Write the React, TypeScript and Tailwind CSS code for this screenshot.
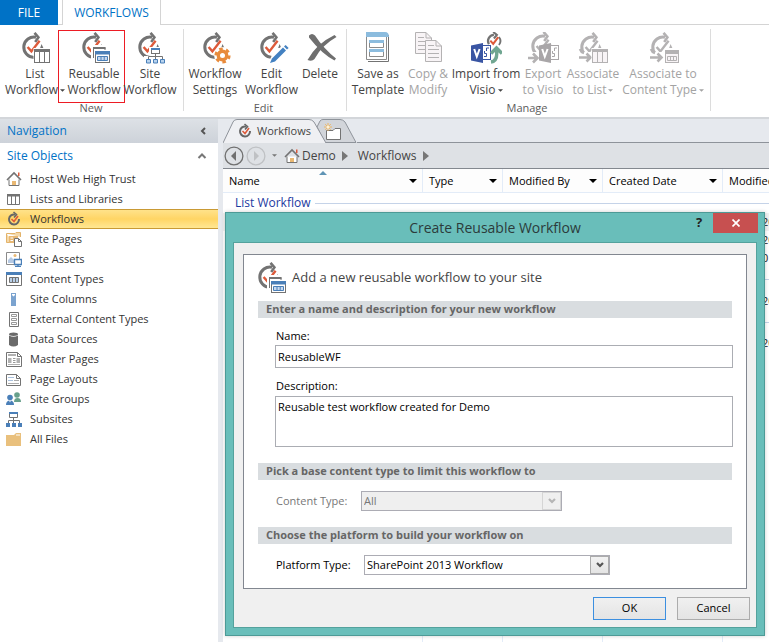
import type { ReactNode } from "react";

const GRAY = "#737373";
const RED = "#dd5a3a";
const BLUE = "#4a7fb8";
const FADED = "#b4b2b3";

type Tint = { off?: boolean };

function FlowMark({ off, check = true }: Tint & { check?: boolean }) {
  const c = off ? FADED : GRAY;
  return (
    <g fill="none">
      <path d="M16 5.2A10.2 10.2 0 1 0 14 25.4" stroke={c} strokeWidth="3" />
      <path d="M14.5 0.8L18.4 5.4L15.2 10" stroke={c} strokeWidth="2.6" />
      {check && <path d="M7.6 15L11.4 19.4L19.6 8.8" stroke={off ? FADED : RED} strokeWidth="2.4" />}
      <path d="M21.5 12L23.4 16H20.2Z" fill={c} />
    </g>
  );
}

function Icon({ children }: { children: ReactNode }) {
  return (
    <svg viewBox="0 0 32 32" className="h-8 w-8 shrink-0" aria-hidden="true">
      {children}
    </svg>
  );
}

function ListFlowIcon({ off }: Tint) {
  const c = off ? FADED : GRAY;
  return (
    <Icon>
      <FlowMark off={off} />
      {off && (
        <g>
          <rect x="0" y="20" width="15" height="11" fill="#fff" />
          <path d="M2 17Q3 20 6 21M1 25.5H11M8.5 21.5L12.5 25.5L8.5 29.5" fill="none" stroke={c} strokeWidth="2.6" />
        </g>
      )}
      <rect x="13.5" y="16" width="18" height="16" fill="#fff" />
      <rect x="14.5" y="17.5" width="15" height="13" fill={off ? "#f8f4f6" : "#fff"} stroke={c} />
      <path d="M14 17H30V20H14Z" fill={c} />
      <path d="M19.5 20V30.5M24.5 20V30.5" stroke={c} />
    </Icon>
  );
}

function ReusableIcon() {
  return (
    <Icon>
      <FlowMark />
      <path d="M11 13H26V17H31V32H13V28H11Z" fill="#fff" />
      <path d="M13.5 26V15.5H25V18" fill="none" stroke={GRAY} />
      <path d="M13 15H25.5V17H13Z" fill={GRAY} />
      <rect x="15.5" y="19.5" width="14" height="11" fill="#fff" stroke={GRAY} />
      <path d="M15 19H30V22.5H15Z" fill={BLUE} />
      <path d="M17.5 24.5H27.5V28.5H17.5ZM21 24.5V28.5M24.2 24.5V28.5" fill="#c7d9ef" stroke={BLUE} />
    </Icon>
  );
}

function SiteFlowIcon() {
  return (
    <Icon>
      <FlowMark />
      <rect x="13" y="15" width="12" height="8" fill="#fff" />
      <path d="M8 24H30V32H8Z" fill="#fff" />
      <rect x="15.5" y="16.5" width="8" height="5" fill="#fff" stroke={GRAY} />
      <path d="M15 16H24V18H15Z" fill={BLUE} />
      <path d="M19.5 22V27M12.5 27V24.5H26.5V27" fill="none" stroke={GRAY} />
      <path d="M10.5 27.5H14.5V31H10.5ZM17.5 27.5H21.5V31H17.5ZM24.5 27.5H28.5V31H24.5Z" fill="#b8d3ee" stroke={BLUE} />
    </Icon>
  );
}

function SettingsFlowIcon() {
  return (
    <Icon>
      <FlowMark />
      <circle cx="21.5" cy="23.5" r="8.4" fill="#fff" />
      <circle cx="21.5" cy="23.5" r="4.2" fill="none" stroke="#e88b3c" strokeWidth="3.4" />
      <circle cx="21.5" cy="23.5" r="6.6" fill="none" stroke="#e88b3c" strokeWidth="3" strokeDasharray="3.5 3.41" />
    </Icon>
  );
}

function EditFlowIcon() {
  return (
    <Icon>
      <FlowMark />
      <path d="M10 32L14 23L27 11L32 15L19 30Z" fill="#fff" />
      <path d="M12 31L14 26.5L25 15.5L28 18.5L17 29.5Z" fill="#4381c1" />
      <path d="M26 14.5L27.6 12.9L30.6 15.9L29 17.5Z" fill="#4381c1" />
    </Icon>
  );
}

function DeleteIcon() {
  return (
    <Icon>
      <path d="M3 3.5Q6 0.5 9 3.5Q18 17 30 26.5L28.5 28.5Q16 22 3 5.5Z" fill="#6f6f6f" />
      <path d="M28.5 3L30.5 5Q16 13 8.5 27Q6 30 1.5 28Q10 12 28.5 3Z" fill="#6f6f6f" />
    </Icon>
  );
}

function TemplateIcon() {
  return (
    <Icon>
      <path d="M6 29.5H26.5V3" fill="none" stroke={GRAY} />
      <path d="M4.5 1.5H24.5V27.5H4.5Z" fill="#fff" stroke="#8b8b8b" />
      <path d="M4 0H23Q27 0 27 5H4Z" fill="#8cbcde" />
      <path d="M7.5 8.5H21.5V15.5H7.5ZM7.5 17.5H21.5V24.5H7.5Z" fill="#fff" stroke="#8b8b8b" />
      <path d="M7 8H22V11H7ZM7 17H22V20H7Z" fill="#8cbcde" />
    </Icon>
  );
}

function CopyIcon() {
  return (
    <Icon>
      <g fill="#f8f4f6" stroke={FADED}>
        <path d="M3.5 0.5H14L19.5 6V21.5H3.5Z" />
        <path d="M14 0.5V6H19.5M6 5.5H12M6 9.5H17M6 13.5H14M6 17.5H14" fill="none" />
        <path d="M13.5 8.5H24L29.5 14V29.5H13.5Z" />
        <path d="M24 8.5V14H29.5M16 13.5H22M16 17.5H27M16 21.5H27M16 25.5H27" fill="none" />
      </g>
    </Icon>
  );
}

function VisioBadge({ off, x }: Tint & { x: number }) {
  const c = off ? "#a9a6a8" : "#3955a3";
  return (
    <g transform={`translate(${x} 11)`}>
      <rect x="10" y="2.5" width="9.5" height="14" fill="#fff" stroke={c} />
      <path d="M13 13.5H15.5V10.5H13.5V8M15.5 8V5H18" fill="none" stroke={c} />
      <path d="M0 2.5L12 0V20L0 17.5Z" fill={c} />
      <path d="M3.2 6L5.8 13.5L8.6 6" fill="none" stroke="#fff" strokeWidth="2" />
    </g>
  );
}

function ImportIcon() {
  return (
    <Icon>
      <g transform="translate(16 0) scale(.72)">
        <path d="M11 4A8.6 8.6 0 0 0 4 17" fill="none" stroke={GRAY} strokeWidth="3" />
        <path d="M10 0L15 4L11 9" fill="none" stroke={GRAY} strokeWidth="3" />
        <path d="M18 7A9 9 0 0 1 18 18" fill="none" stroke={GRAY} strokeWidth="2.6" />
        <path d="M6 12L10 16.5L17 7" fill="none" stroke={RED} strokeWidth="2.8" />
      </g>
      <VisioBadge x={1} />
      <path d="M21 21.5L26.5 16L32 21.5M26.5 18Q28 29 21 30" fill="none" stroke="#70a691" strokeWidth="3.4" />
    </Icon>
  );
}

function ExportIcon() {
  return (
    <Icon>
      <g transform="translate(2 -1)">
        <FlowMark off />
      </g>
      <rect x="0" y="20" width="14" height="12" fill="#fff" />
      <path d="M1 26H9M6 21.5L10.5 26L6 30.5" fill="none" stroke={FADED} strokeWidth="2.6" />
      <VisioBadge x={12} off />
    </Icon>
  );
}

function ContentFlowIcon() {
  return (
    <Icon>
      <FlowMark off />
      <rect x="0" y="20" width="15" height="11" fill="#fff" />
      <path d="M2 17Q3 20 6 21M1 25.5H11M8.5 21.5L12.5 25.5L8.5 29.5" fill="none" stroke={FADED} strokeWidth="2.6" />
      <rect x="15" y="17" width="17" height="15" fill="#fff" />
      <rect x="16.5" y="19.5" width="13" height="11" fill="#f8f4f6" stroke={FADED} />
      <path d="M16 18H30V22H16Z" fill={FADED} />
      <path d="M18.5 24.5H27.5V28.5H18.5ZM21.5 24.5V28.5M24.5 24.5V28.5" fill="none" stroke={FADED} />
    </Icon>
  );
}

function Caret({ className }: { className: string }) {
  return (
    <svg viewBox="0 0 8 4" className={className} aria-hidden="true">
      <path d="M0 0H8L4 4Z" fill="currentColor" />
    </svg>
  );
}

type ActionProps = {
  icon: ReactNode;
  iconPad?: string;
  top: string;
  bottom?: string;
  width: string;
  menu?: boolean;
  off?: boolean;
  marked?: boolean;
};

function Action({ icon, iconPad = "pl-1", top, bottom, width, menu, off, marked }: ActionProps) {
  return (
    <button
      type="button"
      disabled={off}
      className={`relative flex flex-col items-center whitespace-nowrap text-xs leading-4 ${width} ${off ? "text-[#a3a3a3]" : "text-[#444]"}`}
    >
      <span className={`flex ${iconPad}`}>{icon}</span>
      <span className="mt-0.5">{top}</span>
      {bottom && (
        <span className="flex items-center gap-0.5">
          {bottom}
          {menu && <Caret className="h-[3px] w-[5px]" />}
        </span>
      )}
      {marked && <span className="absolute -top-0.5 -left-2 h-[73px] w-[67px] border border-[#ed1c24]" />}
    </button>
  );
}

function Group({ label, pad, children }: { label: string; pad: string; children: ReactNode }) {
  return (
    <section aria-label={label} className={`flex flex-col border-r border-[#dcdcdc] ${pad}`}>
      <div className="flex h-[73px] pt-[3px]">{children}</div>
      <div className="mt-1 text-center text-[11px] leading-3 text-[#5c5c5c]">{label}</div>
    </section>
  );
}

function Ribbon() {
  return (
    <header className="shrink-0 bg-white">
      <div className="flex h-[25px] text-xs">
        <button type="button" className="w-[58px] bg-[#0072c6] text-white">FILE</button>
        <div className="w-1 border-b border-[#d4d4d4]" />
        <button type="button" className="w-[99px] border-x border-[#d4d4d4] text-[#0072c6]">WORKFLOWS</button>
        <div className="flex-1 border-b border-[#d4d4d4]" />
      </div>
      <div className="flex h-[94px] overflow-hidden border-b-2 border-[#d3d6da] pt-1 pb-1.5">
        <Group label="New" pad="pl-1 pr-[5px]">
          <Action icon={<ListFlowIcon />} iconPad="pl-0.5" top="List" bottom="Workflow" width="w-[62px]" menu />
          <Action icon={<ReusableIcon />} top="Reusable" bottom="Workflow" width="w-[56px]" marked />
          <Action icon={<SiteFlowIcon />} top="Site" bottom="Workflow" width="w-[56px]" />
        </Group>
        <Group label="Edit" pad="pr-[3px]">
          <Action icon={<SettingsFlowIcon />} top="Workflow" bottom="Settings" width="w-[62px]" />
          <Action icon={<EditFlowIcon />} top="Edit" bottom="Workflow" width="w-[51px]" />
          <Action icon={<DeleteIcon />} top="Delete" width="w-[46px]" />
        </Group>
        <Group label="Manage" pad="pl-[3px] pr-[6px]">
          <Action icon={<TemplateIcon />} iconPad="pl-0" top="Save as" bottom="Template" width="w-[56px]" />
          <Action icon={<CopyIcon />} iconPad="pl-0" top="Copy &" bottom="Modify" width="w-[44px]" off />
          <Action icon={<ImportIcon />} iconPad="pl-0" top="Import from" bottom="Visio" width="w-[72px]" menu />
          <Action icon={<ExportIcon />} iconPad="pl-0" top="Export" bottom="to Visio" width="w-[42px]" off />
          <Action icon={<ListFlowIcon off />} iconPad="pl-0.5" top="Associate" bottom="to List" width="w-[58px]" menu off />
          <Action icon={<ContentFlowIcon />} top="Associate to" bottom="Content Type" width="w-[82px]" menu off />
        </Group>
      </div>
    </header>
  );
}

const HOME = (
  <g>
    <path d="M3 8.5V14.5H13V8.5" fill="#fff" stroke={GRAY} />
    <path d="M1 9L8 2L15 9" fill="none" stroke={GRAY} strokeWidth="1.6" />
    <path d="M12 1.5H13.5V5H12Z" fill={RED} />
    <path d="M6 10H10V14H6Z" fill="#e9b872" />
  </g>
);

const FLOW = (
  <g fill="none">
    <path d="M9 3.5A5 5 0 1 0 13 8" stroke="#666" strokeWidth="2" />
    <path d="M7.5 1L10.5 3.5L8 6.5" stroke="#666" strokeWidth="1.6" />
    <path d="M5.5 8L8 10.5L12 5" stroke={RED} strokeWidth="1.6" />
  </g>
);

function Small({ children }: { children: ReactNode }) {
  return (
    <svg viewBox="0 0 16 16" className="h-4 w-4 shrink-0" aria-hidden="true">
      {children}
    </svg>
  );
}

const NAV: { label: string; icon: ReactNode; current?: boolean }[] = [
  { label: "Host Web High Trust", icon: HOME },
  {
    label: "Lists and Libraries",
    icon: (
      <g>
        <path d="M1.5 3.5H13.5V13.5H1.5ZM5.5 5V13.5M9.5 5V13.5" fill="#fff" stroke={GRAY} />
        <path d="M1 3H14V5.5H1Z" fill={GRAY} />
      </g>
    ),
  },
  { label: "Workflows", icon: FLOW, current: true },
  {
    label: "Site Pages",
    icon: (
      <g>
        <path d="M0.5 2.5H9L10 1.5H14.5V6M0.5 2.5V11.5H7" fill="#f4d8a8" stroke="#e3b36a" />
        <path d="M3 5H12V12H3Z" fill="#e8b873" />
        <path d="M4.5 7H7M4.5 9.5H7" stroke="#fff" />
        <path d="M8.5 7.5H12.5L15.5 10.5V15.5H8.5Z" fill="#fff" stroke={GRAY} />
        <path d="M12.5 7.5V10.5H15.5" fill="none" stroke={GRAY} />
      </g>
    ),
  },
  {
    label: "Site Assets",
    icon: (
      <g>
        <path d="M0.5 1.5H13.5V13.5H0.5Z" fill="#fff" stroke="#8a8a8a" />
        <circle cx="9" cy="4.5" r="1.5" fill="#e9b872" />
        <path d="M2 12V9L5 6L8 9V12Z" fill="#b6c9e2" />
        <path d="M8.5 8.5H15.5V13.5H8.5Z" fill="#fff" stroke={BLUE} strokeWidth="1.4" />
        <path d="M9 15.5H15M12 13.5V15.5" stroke={BLUE} strokeWidth="1.4" />
      </g>
    ),
  },
  {
    label: "Content Types",
    icon: (
      <g>
        <path d="M0.5 1.5H15.5V14.5H0.5Z" fill="#fff" stroke={GRAY} />
        <path d="M0 1H16V4H0Z" fill={BLUE} />
        <path d="M3.5 6.5H12.5V11.5H3.5ZM6.5 6.5V11.5M9.5 6.5V11.5" fill="#b8cfe8" stroke={GRAY} />
      </g>
    ),
  },
  {
    label: "Site Columns",
    icon: (
      <g>
        <path d="M5 2H10V15H5Z" fill="#7ba3cf" />
        <path d="M6 3H9V4L7.5 5.5L6 4Z" fill="#fff" />
      </g>
    ),
  },
  {
    label: "External Content Types",
    icon: (
      <g fill="#fff" stroke={GRAY}>
        <path d="M3.5 1.5H12.5V15.5H3.5Z" />
        <path d="M5.5 3.5H10.5V5.5H5.5ZM5.5 7.5H10.5V9.5H5.5ZM5.5 11.5H10.5V13.5H5.5Z" stroke="#999" />
      </g>
    ),
  },
  {
    label: "Data Sources",
    icon: (
      <g fill="#6a6a6a">
        <path d="M3 4.5Q7.5 7 12 4.5V14Q7.5 17 3 14Z" />
        <ellipse cx="7.5" cy="3.2" rx="4.5" ry="1.7" />
      </g>
    ),
  },
  {
    label: "Master Pages",
    icon: (
      <g>
        <path d="M0.5 1.5H11.5L15.5 5.5V15.5H0.5Z" fill="#fff" stroke={GRAY} />
        <path d="M11.5 1.5V5.5H15.5" fill="none" stroke={GRAY} />
        <path d="M2 3H10V5H2ZM2 7H5.5V12H2ZM10.5 7H14V12H10.5ZM2 13H14V14H2Z" fill="#b0b0b0" />
        <path d="M7 7.5H9.5M7 9.5H9.5M7 11.5H9.5" stroke="#999" />
      </g>
    ),
  },
  {
    label: "Page Layouts",
    icon: (
      <g fill="none" stroke={GRAY}>
        <path d="M0.5 3.5H10.5L14.5 7.5V14.5H0.5Z" fill="#fff" />
        <path d="M10.5 3.5V7.5H14.5" />
        <path d="M2 6.5H8M2 9.5H7" stroke="#a9c1de" />
        <path d="M8 9.5H13M2 12.5H13" stroke="#aaa" />
      </g>
    ),
  },
  {
    label: "Site Groups",
    icon: (
      <g>
        <circle cx="11" cy="4" r="2.8" fill="#68a08c" />
        <path d="M8 11Q8 7 11.5 7Q15 7 15 11Z" fill="#68a08c" />
        <circle cx="4" cy="6.5" r="2.8" fill={BLUE} />
        <path d="M0 14Q0 9.5 4 9.5Q8 9.5 8 14Z" fill={BLUE} />
        <path d="M3 9.5H5L4 11.5Z" fill="#fff" />
      </g>
    ),
  },
  {
    label: "Subsites",
    icon: (
      <g>
        <path d="M3.5 1.5H11.5V6.5H3.5ZM7.5 6.5V12M2.5 12V9.5H13.5V12" fill="none" stroke={GRAY} />
        <path d="M3 1H12V3H3ZM0 12H4V16H0ZM6 12H10V16H6ZM12 12H16V16H12Z" fill={BLUE} />
      </g>
    ),
  },
  {
    label: "All Files",
    icon: (
      <g>
        <path d="M0 4H8L10 2H15V15H0Z" fill="#e9c07d" />
        <path d="M10 4H14" stroke="#fff" />
      </g>
    ),
  },
];

function Navigation() {
  return (
    <nav className="flex w-[218px] shrink-0 flex-col bg-white text-[11px]">
      <div className="flex h-6 items-center justify-between bg-gradient-to-b from-[#dde1e6] to-[#cdd2d9] pr-[11px] pl-[7px] text-xs text-[#0072c6]">
        Navigation
        <svg viewBox="0 0 8 8" className="h-2 w-2" aria-hidden="true">
          <path d="M6 1L3 4L6 7" fill="none" stroke="#555" strokeWidth="2" />
        </svg>
      </div>
      <div className="flex h-[25px] items-center justify-between pr-[11px] pl-[7px] text-xs text-[#0072c6]">
        Site Objects
        <svg viewBox="0 0 10 8" className="h-2 w-2.5" aria-hidden="true">
          <path d="M1.5 6L5 2.5L8.5 6" fill="none" stroke="#777" strokeWidth="2" />
        </svg>
      </div>
      <ul className="pt-px">
        {NAV.map((item) => (
          <li key={item.label}>
            <a
              href="#"
              aria-current={item.current ? "page" : undefined}
              className={`flex h-5 items-center gap-2 border-y pl-1.5 text-[#333] ${
                item.current ? "border-[#c99a35] bg-gradient-to-b from-[#ffe28a] via-[#ffd564] to-[#ffe793]" : "border-transparent"
              }`}
            >
              <Small>{item.icon}</Small>
              {item.label}
            </a>
          </li>
        ))}
      </ul>
    </nav>
  );
}

function TabStrip() {
  return (
    <div className="flex h-6 items-end">
      <button type="button" className="relative z-10 flex h-6 w-[104px] shrink-0 items-center gap-1 pl-3.5 text-[11px] text-[#444]">
        <svg viewBox="0 0 104 24" className="absolute inset-0 -z-10 h-6 w-[104px]" aria-hidden="true">
          <path d="M0 24L10 3Q11 .5 14 .5H86Q89 .5 91 3L103 24" fill="#eff0f3" stroke="#8e939a" />
        </svg>
        <Small>{FLOW}</Small>
        Workflows
      </button>
      <button type="button" aria-label="New tab" className="relative -ml-2.5 h-6 w-10 shrink-0">
        <svg viewBox="0 0 40 24" className="h-6 w-10" aria-hidden="true">
          <path d="M0 8L3 2Q4 .5 6 .5H23Q26 .5 28 3L39 23.5H8Z" fill="#d2d5da" stroke="#8e939a" />
          <path d="M9.5 11.5H16L18 9.5H23.5V20.5H9.5Z" fill="#fff" stroke={GRAY} />
          <path d="M11 4V12M7 8H15M8.2 5.2L13.8 10.8M13.8 5.2L8.2 10.8" stroke="#eeb765" />
          <circle cx="11" cy="8" r="1.5" fill="#fff3d8" />
        </svg>
      </button>
      <div className="h-px flex-1 bg-[#8e939a]" />
    </div>
  );
}

function RoundArrow({ off }: Tint) {
  const c = off ? "#bfc1c4" : "#707070";
  return (
    <button type="button" aria-label={off ? "Forward" : "Back"} disabled={off}>
      <svg viewBox="0 0 20 20" className="h-5 w-5" aria-hidden="true">
        <circle cx="10" cy="10" r="8.9" fill="none" stroke={c} strokeWidth="1.3" />
        <path d={off ? "M8 5V15L13 10Z" : "M12 5V15L7 10Z"} fill={c} />
      </svg>
    </button>
  );
}

function Chevron() {
  return (
    <svg viewBox="0 0 6 10" className="h-2.5 w-1.5 shrink-0" aria-hidden="true">
      <path d="M0 0V10L6 5Z" fill="#777" />
    </svg>
  );
}

function Breadcrumb() {
  return (
    <div className="flex h-[26px] items-center border-b border-[#83888f] bg-[#dee1e5] pl-px text-xs text-[#444]">
      <RoundArrow />
      <span className="w-0.5" />
      <RoundArrow off />
      <Caret className="ml-1.5 h-[3px] w-[5px] text-[#777]" />
      <nav aria-label="Path" className="ml-[7px] flex items-center gap-1.5">
        <a href="#" className="flex items-center gap-0.5">
          <Small>{HOME}</Small>
          Demo
        </a>
        <Chevron />
        <a href="#" className="pl-1">Workflows</a>
        <Chevron />
      </nav>
    </div>
  );
}

const LINE = "border-r border-[#e3ecf8]";

function GroupRow({ title, height }: { title?: string; height: string }) {
  return (
    <tr className={height}>
      <td colSpan={5} className="p-0">
        <div className="flex items-center gap-1 pl-3">
          <span className="text-[#1c3aa0]">{title}</span>
          <span className="h-px flex-1 bg-[#c5d3e8]" />
        </div>
      </td>
    </tr>
  );
}

function DataRow({ value, picked }: { value: string; picked?: boolean }) {
  return (
    <tr className={`h-[18px] ${picked ? "bg-[#f2f2f2]" : ""}`}>
      <td className={LINE} />
      <td className={LINE} />
      <td className={LINE} />
      <td className={LINE} />
      <td className="overflow-hidden p-0 pl-[39px] text-[#222]">{value}</td>
    </tr>
  );
}

const COLUMNS = ["Name", "Type", "Modified By", "Created Date"];

function Listing() {
  return (
    <div className="flex-1 overflow-hidden bg-white">
      <table className="h-full w-full table-fixed border-separate border-spacing-0 text-[11px] leading-4 whitespace-nowrap">
        <colgroup>
          <col className="w-[200px]" />
          <col className="w-[80px]" />
          <col className="w-[100px]" />
          <col className="w-[120px]" />
          <col />
        </colgroup>
        <thead>
          <tr className="h-6 bg-[#fdfdfd]">
            {COLUMNS.map((name) => (
              <th key={name} scope="col" className={`relative border-b p-0 pr-[5px] pl-1.5 font-normal ${LINE}`}>
                <span className="flex items-center justify-between text-black">
                  {name}
                  <Caret className="h-1 w-2" />
                </span>
                {name === "Name" && (
                  <svg viewBox="0 0 8 4" className="absolute top-0.5 left-24 h-1 w-2" aria-hidden="true">
                    <path d="M0 4L4 0L8 4Z" fill="#5f94b5" />
                  </svg>
                )}
              </th>
            ))}
            <th scope="col" className="overflow-hidden border-b border-[#e3ecf8] p-0 pl-1.5 text-left font-normal">
              Modified
            </th>
          </tr>
        </thead>
        <tbody>
          <GroupRow title="List Workflow" height="h-5 text-xs" />
          <DataRow value="20" picked />
          <DataRow value="20" />
          <DataRow value="01" />
          <GroupRow height="h-[25px]" />
          <DataRow value="20" />
          <GroupRow height="h-6" />
          <DataRow value="20" />
          <tr>
            <td className={LINE} />
            <td className={LINE} />
            <td className={LINE} />
            <td className={LINE} />
            <td />
          </tr>
        </tbody>
      </table>
    </div>
  );
}

function Band({ children }: { children: ReactNode }) {
  return <h2 className="h-[17px] bg-[#d9dde0] pl-2 text-[11px] leading-4 font-bold text-[#666]">{children}</h2>;
}

function Drop({ id, value, width, off }: { id: string; value: string; width: string; off?: boolean }) {
  return (
    <div className={`relative ${width}`}>
      <select
        id={id}
        disabled={off}
        defaultValue={value}
        className={`block h-5 w-full appearance-none rounded-none border border-[#acacb4] pl-0.5 opacity-100 ${
          off ? "bg-[#efefef] text-[#777]" : "bg-white text-black"
        }`}
      >
        <option>{value}</option>
      </select>
      <span
        className={`pointer-events-none absolute inset-y-px right-px flex w-[19px] items-center justify-center border ${
          off ? "border-[#d5d5d5] bg-[#efefef] text-[#b5b5b5]" : "border-[#acacac] bg-gradient-to-b from-[#f2f2f2] to-[#e4e4e4] text-[#555]"
        }`}
      >
        <svg viewBox="0 0 8 8" className="h-2 w-2" aria-hidden="true">
          <path d="M1 2L4 5L7 2" fill="none" stroke="currentColor" strokeWidth="2.2" />
        </svg>
      </span>
    </div>
  );
}

function Dialog() {
  return (
    <div
      role="dialog"
      aria-labelledby="dialog-title"
      className="absolute top-[212px] right-1 left-[225px] z-20 border border-[#4d9a96] bg-[#69beba] px-[7px] pb-[7px] text-[11px] shadow-[0_0_4px_rgba(0,0,0,0.2)]"
    >
      <div className="relative flex h-[29px] items-center justify-center">
        <h1 id="dialog-title" className="text-sm text-[#2c3b3b]">Create Reusable Workflow</h1>
        <div className="absolute top-0 -right-px flex h-5 items-center">
          <button type="button" aria-label="Help" className="w-7 text-[13px] font-bold text-[#222]">?</button>
          <button type="button" aria-label="Close" className="flex h-5 w-[45px] items-center justify-center bg-[#c75050]">
            <svg viewBox="0 0 8 8" className="h-2 w-2" aria-hidden="true">
              <path d="M.5 .5L7.5 7.5M7.5 .5L.5 7.5" stroke="#fff" strokeWidth="1.7" />
            </svg>
          </button>
        </div>
      </div>
      <form className="border border-[#54a29d] bg-[#f0f0f0] px-[9px] pt-[11px] pb-[7px]" onSubmit={(e) => e.preventDefault()}>
        <div className="border border-[#828790] bg-white pt-[7px] pr-3.5 pb-[13px]">
          <div className="flex h-[39px] items-start gap-1 pl-3 text-[13px] text-[#444]">
            <ReusableIcon />
            <p className="leading-[30px]">Add a new reusable workflow to your site</p>
          </div>
          <div className="pl-3.5">
            <Band>Enter a name and description for your new workflow</Band>
            <div className="flex flex-col pt-2 pb-4 pl-[17px]">
              <label htmlFor="wf-name" className="pl-px leading-[19px]">Name:</label>
              <input id="wf-name" type="text" defaultValue="ReusableWF" className="-mr-px h-[23px] border border-[#abadb3] bg-white px-0.5" />
              <label htmlFor="wf-desc" className="mt-2 pl-px leading-5">Description:</label>
              <textarea
                id="wf-desc"
                defaultValue="Reusable test workflow created for Demo"
                className="-mr-px h-[51px] resize-none border border-[#abadb3] bg-white px-0.5 py-0.5 leading-4"
              />
            </div>
            <Band>Pick a base content type to limit this workflow to</Band>
            <div className="flex items-center gap-2.5 pt-[11px] pb-4 pl-[18px]">
              <label htmlFor="wf-type" className="w-[75px] whitespace-nowrap text-[#777]">Content Type:</label>
              <Drop id="wf-type" value="All" width="w-[201px]" off />
            </div>
            <Band>Choose the platform to build your workflow on</Band>
            <div className="flex items-center gap-2.5 pt-[11px] pl-[18px]">
              <label htmlFor="wf-platform" className="w-[78px] whitespace-nowrap">Platform Type:</label>
              <Drop id="wf-platform" value="SharePoint 2013 Workflow" width="w-[246px]" />
            </div>
          </div>
        </div>
        <div className="-mr-[3px] flex justify-end gap-[11px] pt-2">
          <button type="submit" className="h-[23px] w-[73px] border border-[#3c8fe0] bg-gradient-to-b from-[#f0f0f0] to-[#e4e4e4]">OK</button>
          <button type="button" className="h-[23px] w-[73px] border border-[#acacac] bg-gradient-to-b from-[#f0f0f0] to-[#e4e4e4]">Cancel</button>
        </div>
      </form>
    </div>
  );
}

export default function App() {
  return (
    <div className="relative flex h-screen flex-col overflow-hidden bg-[#e6e9ee] font-['Open_Sans','Noto_Sans',sans-serif] text-black">
      <Ribbon />
      <div className="flex min-h-0 flex-1">
        <Navigation />
        <main className="ml-[5px] flex min-w-0 flex-1 flex-col">
          <TabStrip />
          <Breadcrumb />
          <Listing />
        </main>
      </div>
      <Dialog />
    </div>
  );
}
